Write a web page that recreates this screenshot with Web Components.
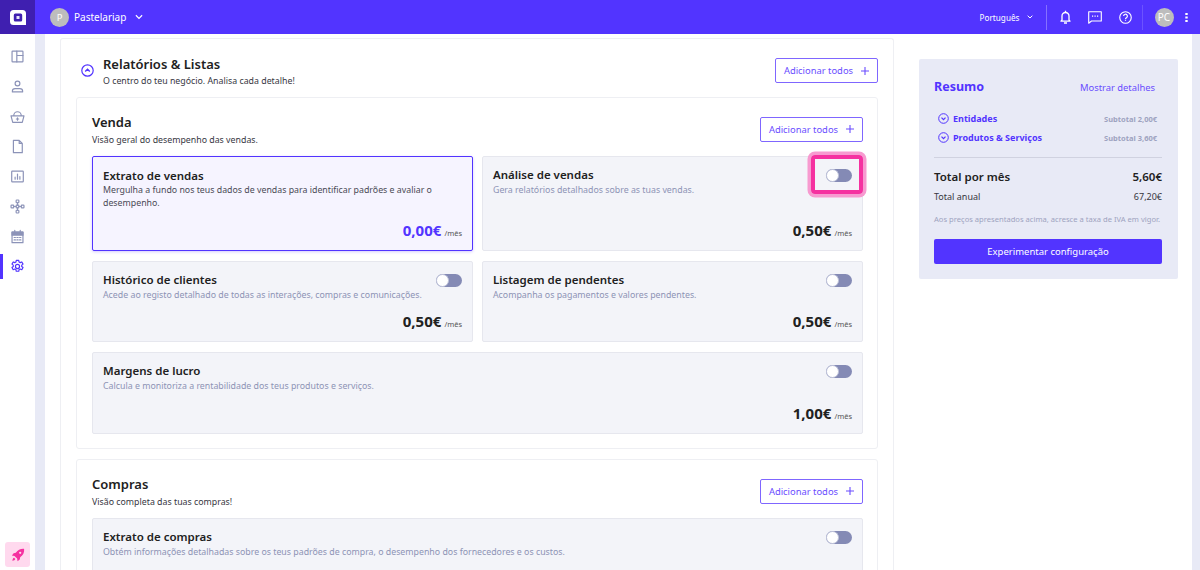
<!DOCTYPE html>
<html lang="pt"><head><meta charset="utf-8">
<style>
html,body{margin:0;padding:0;height:100%;overflow:hidden}
body{font-family:"Noto Sans",sans-serif;color:#212121;background:#e8eaf6}
</style></head>
<body>
<app-shell></app-shell>
<script>
const I={
 layout:'<rect x="3" y="3" width="16" height="16" rx="1"/><path d="M10 3v16M10 9.5h9"/>',
 user:'<circle cx="11" cy="6.5" r="3.5"/><path d="M3.5 19v-1.5c0-2 2-3.5 4-3.5h7c2 0 4 1.5 4 3.5V19z"/>',
 basket:'<path d="M1.5 10h19L18 19.5H4zM5.5 10a5.5 6 0 0 1 11 0M11 13v3.5M9.3 14.7h3.4"/>',
 doc:'<path d="M5 2h8.5L18 6.5V20H5zM13.5 2v4.5H18"/>',
 chart:'<rect x="2.5" y="3" width="17" height="16" rx="1"/><path d="M7.5 15v-3M11 15V7.5M14.5 15v-4"/>',
 nodes:'<rect x="9" y="1.5" width="4" height="4" rx="1"/><rect x="9" y="16.5" width="4" height="4" rx="1"/><rect x="1.5" y="9" width="4" height="4" rx="1"/><rect x="9" y="9" width="4" height="4" rx="1"/><rect x="16.5" y="9" width="4" height="4" rx="1"/><path d="M11 5.5V9M11 13v3.5M5.5 11H9M13 11h3.5"/>',
 cal:'<path d="M3 4.5h16V20H3z"/><path d="M3 4.5h16V9H3z" fill="currentColor"/><path d="M7 2v3M15 2v3"/><path stroke-width="1.6" d="M6 12.5h2M10 12.5h2M14 12.5h2M6 16h2M10 16h2M14 16h2"/>',
 gear:'<circle cx="11" cy="11" r="3"/><path d="M9.2 2h3.6l.5 2.5 1.7.8 2.3-1 1.8 3.2-1.9 1.5v2l1.9 1.5-1.800 3.200-2.300-1-1.700.8-.5 2.500H9.200l-.5-2.500-1.700-.8-2.300 1-1.800-3.200 1.900-1.500v-2L2.900 7.500l1.800-3.200 2.300 1 1.700-.8z"/>'
};
customElements.define('nav-icon',class extends HTMLElement{
 connectedCallback(){
  const a=this.hasAttribute('active');const c=a?'#5234ff':'#8c93b8';
  this.attachShadow({mode:'open'}).innerHTML=`<style>:host{display:flex;height:30px;align-items:center;justify-content:center;position:relative;color:${c}}
  .bar{position:absolute;left:0;top:3px;bottom:2.5px;width:3px;background:#5234ff}</style>
  ${a?'<div class="bar"></div>':''}
  <svg width="15" height="15" viewBox="0 0 22 22" fill="none" stroke="${c}" stroke-width="1.75" stroke-linejoin="round" stroke-linecap="round">${I[this.getAttribute('icon')]}</svg>`;
 }
});
customElements.define('side-bar',class extends HTMLElement{
 constructor(){super();this.attachShadow({mode:'open'}).innerHTML=`<style>
 :host{display:flex;flex-direction:column;width:35px;background:#fff;flex:none;box-sizing:border-box;padding:7px 0 0}
 .sp{flex:1}
 .rocket{width:25px;height:25px;margin:0 0 3px 5px;background:#ffd9ee;border-radius:3px;display:flex;align-items:center;justify-content:center}
 </style>
 <nav-icon icon="layout"></nav-icon><nav-icon icon="user"></nav-icon><nav-icon icon="basket"></nav-icon><nav-icon icon="doc"></nav-icon>
 <nav-icon icon="chart"></nav-icon><nav-icon icon="nodes"></nav-icon><nav-icon icon="cal"></nav-icon><nav-icon icon="gear" active></nav-icon>
 <div class="sp"></div>
 <div class="rocket"><svg width="14" height="14" viewBox="0 0 16 16" fill="#f531a0"><path d="M15 1c-4-.3-7 1-9.500 4.500L3 6 1 8.500l3 .5 3 3 .5 3L10 13l.5-2.500C14 8 15.300 5 15 1z"/><path d="M3.500 11c-1 .3-1.800 1.500-2 3.500 2-.2 3.200-1 3.500-2z"/><circle cx="10.500" cy="5.500" r="1.300" fill="#ffd9ee"/></svg></div>`;}
});
customElements.define('top-bar',class extends HTMLElement{
 constructor(){super();this.attachShadow({mode:'open'}).innerHTML=`<style>
 :host{display:flex;height:34px;background:#5234ff;color:#fff;align-items:center;flex:none}
 .logo{width:35px;height:34px;background:#3f1fb0;display:flex;align-items:center;justify-content:center;flex:none}
 .org{display:flex;align-items:center;margin-left:15px;font-size:10px}
 .av{width:19px;height:19px;border-radius:50%;background:#bdbdbd;display:flex;align-items:center;justify-content:center;font-size:9.5px;margin-right:5px}
 .sp{flex:1}
 .lang{font-size:8.2px;display:flex;align-items:center;margin-right:13px}
 .sep{width:1px;height:25px;background:rgba(255,255,255,.3);flex:none}
 svg{display:block;flex:none}
 .pc{width:19px;height:19px;border-radius:50%;background:#bdbdbd;display:flex;align-items:center;justify-content:center;font-size:10px;margin:0 11.5px 0 11.5px}
 </style>
 <div class="logo"><svg width="16" height="15" viewBox="0 0 16 15"><path d="M3.5 0h9A3.5 3.5 0 0 1 16 3.5V15H3.5A3.5 3.5 0 0 1 0 11.5v-8A3.5 3.5 0 0 1 3.5 0z" fill="#fff"/><rect x="3.8" y="3.5" width="8.4" height="8" rx="1.5" fill="#3f1fb0"/><rect x="6.5" y="6" width="3" height="3" fill="#e9e4fb"/></svg></div>
 <div class="org"><span class="av">P</span>Pastelariap<svg style="margin-left:9px" width="8" height="6" viewBox="0 0 9 6" fill="none" stroke="#fff" stroke-width="1.3"><path d="M1 1l3.5 3.5L8 1"/></svg></div>
 <div class="sp"></div>
 <div class="lang">Português<svg style="margin-left:7.5px" width="6" height="4" viewBox="0 0 9 6" fill="none" stroke="#fff" stroke-width="1.5"><path d="M1 1l3.5 3.5L8 1"/></svg></div>
 <div class="sep"></div>
 <svg style="margin-left:13px" width="11" height="14" viewBox="0 0 11 14" fill="none" stroke="#fff" stroke-width="1.3"><path d="M2 10V6a3.5 3.5 0 0 1 7 0v4l1 1.2H1z" stroke-linejoin="round"/><path d="M4 13h3M5.5 .8v1.7"/></svg>
 <svg style="margin-left:16.5px" width="14" height="13" viewBox="0 0 14 13" fill="none" stroke="#fff" stroke-width="1.1"><path d="M.7.7h12.6V10H3.5L.7 12.2z" stroke-linejoin="round"/><path stroke-width="1.2" d="M4 5.2h1.2M6.500 5.200h1.200M9 5.200h1.200"/></svg>
 <svg style="margin-left:17.5px" width="13" height="13" viewBox="0 0 14 14" fill="none" stroke="#fff" stroke-width="1.2"><circle cx="7" cy="7" r="6.2"/><path d="M5 5.500a2 2 0 1 1 3 1.700c-.7.400-1 .8-1 1.600M7 10v.9" stroke-width="1.3"/></svg>
 <div class="sep" style="margin-left:10px;opacity:.5"></div>
 <div class="pc">PC</div>
 <svg style="margin-right:12px" width="3" height="9" viewBox="0 0 3 9" fill="#fff"><rect x=".3" y="0" width="2.4" height="2"/><rect x=".3" y="3.5" width="2.4" height="2"/><rect x=".3" y="7" width="2.4" height="2"/></svg>`;}
});
customElements.define('add-all',class extends HTMLElement{
 constructor(){super();this.attachShadow({mode:'open'}).innerHTML=`<style>
 :host{display:inline-flex;height:25px;width:103px;box-sizing:border-box;border:1px solid #7f66ff;border-radius:2px;align-items:center;justify-content:center;gap:8px;color:#6a4dff;font-size:9.4px;background:#fff;flex:none}
 </style>Adicionar todos<svg width="8" height="8" viewBox="0 0 8 8" stroke="#6a4dff" stroke-width="1.1"><path d="M4 0v8M0 4h8"/></svg>`;}
});
customElements.define('tog-gle',class extends HTMLElement{
 constructor(){super();this.attachShadow({mode:'open'}).innerHTML=`<style>
 :host{display:block;width:26px;height:13px;border-radius:6.5px;background:#848ab5;position:relative;flex:none}
 i{position:absolute;left:0;top:0;width:13px;height:13px;box-sizing:border-box;border-radius:50%;background:#fff;border:1px solid #bfc3da}
 </style><i></i>`;}
});
customElements.define('mod-card',class extends HTMLElement{
 connectedCallback(){
  const on=this.hasAttribute('selected');const price=this.getAttribute('price');
  this.attachShadow({mode:'open'}).innerHTML=`<style>
 :host{display:flex;flex-direction:column;box-sizing:border-box;height:${this.getAttribute('h')||'81.7'}px;padding:${on?'11px 10px 10px':'10px 10px 10px'};border-radius:2px;
   background:${on?'#f6f4ff':'#f3f4f9'};border:${on?'1.5px solid #5234ff':'1px solid #e6e7ee'};position:relative;${on?'box-shadow:0 1px 3px rgba(82,52,255,.25);':''}}
 .t{display:flex;justify-content:space-between;align-items:flex-start;height:${on?16:17}px}
 h4{margin:0;font-size:11.5px;line-height:15px;font-weight:600;color:#212121}
 p{margin:0;font-size:8.8px;line-height:13px;color:${on?'#4a4a55':'#8d93b5'}}
 .pr{margin-top:auto;display:flex;justify-content:flex-end;align-items:baseline;color:${on?'#5234ff':'#212121'}}
 b{font-size:15px;line-height:20px;font-weight:700}
 small{font-size:7.5px;margin-left:3px;color:#555}
 .hl{position:absolute;top:-2px;right:-1px;width:52px;height:39.5px;box-sizing:border-box;border:4px solid #f531a0;border-radius:4px;box-shadow:0 0 0 3.5px #f79ad0}
 tog-gle{margin-top:2px}
 </style>
 <div class="t"><h4>${this.getAttribute('name')}</h4>${on?'':'<tog-gle></tog-gle>'}</div>
 <p>${this.getAttribute('desc')}</p>
 ${price?`<div class="pr"><b>${price}</b><small>/mês</small></div>`:''}
 ${this.hasAttribute('hl')?'<div class="hl"></div>':''}`;
 }
});
customElements.define('sec-card',class extends HTMLElement{
 connectedCallback(){
  this.attachShadow({mode:'open'}).innerHTML=`<style>
 :host{display:block;background:#fff;border:1px solid #eeeff3;border-radius:3px;padding:15px 14px 14.5px 15px}
 .h{display:flex;justify-content:space-between;align-items:flex-start;margin-bottom:15.5px;height:27px}
 h3{margin:0;font-size:13px;line-height:18px;font-weight:600}
 p{margin:2px 0 0;font-size:8.8px;line-height:14px;color:#37373f}
 add-all{margin-top:3.5px}
 .g{display:grid;grid-template-columns:381px 381px;column-gap:9px;row-gap:10px}
 ::slotted(.wide){grid-column:1/3}
 </style>
 <div class="h"><div><h3>${this.getAttribute('name')}</h3><p>${this.getAttribute('desc')}</p></div><add-all></add-all></div>
 <div class="g"><slot></slot></div>`;
 }
});
customElements.define('sum-panel',class extends HTMLElement{
 constructor(){super();
 const ch='<svg width="11" height="11" viewBox="0 0 11 11" fill="none" stroke="#5234ff" stroke-width="1"><circle cx="5.5" cy="5.5" r="4.8"/><path d="M3.5 4.7l2 2 2-2" stroke-width="1.2"/></svg>';
 this.attachShadow({mode:'open'}).innerHTML=`<style>
 :host{display:block;width:259px;height:220px;box-sizing:border-box;background:#e8eaf6;border-radius:2px;padding:18px 16px 0 15px;flex:none}
 .r{display:flex;justify-content:space-between;align-items:center}
 h3{margin:0;font-size:12.5px;line-height:20px;font-weight:700;color:#5234ff}
 .m{font-size:9.4px;color:#6a4dff;margin-right:7px}
 .e{height:19px;padding:0 5px 0 4px;font-size:9px;font-weight:700;color:#5234ff}
 .e span:first-child{display:flex;align-items:center;gap:4px}
 .e .s{font-size:7.5px;font-weight:700;color:#9ea3c0}
 hr{border:0;border-top:1px solid #d0d2e0;margin:10px 0 8.5px}
 .tot{font-size:11.5px;line-height:20px;font-weight:600;color:#212121}
 .an{font-size:9px;line-height:16px;color:#37373f;margin-top:2.5px}
 .note{font-size:7.6px;line-height:11px;color:#9ea3c0;margin-top:8.5px;white-space:nowrap}
 .b{margin-top:14px;height:25px;background:#5234ff;color:#fff;border-radius:2px;font-size:9.5px;display:flex;align-items:center;justify-content:center}
 </style>
 <div class="r"><h3>Resumo</h3><span class="m">Mostrar detalhes</span></div>
 <div style="height:12px"></div>
 <div class="r e"><span>${ch}Entidades</span><span class="s">Subtotal 2,00€</span></div>
 <div class="r e"><span>${ch}Produtos &amp; Serviços</span><span class="s">Subtotal 3,60€</span></div>
 <hr>
 <div class="r tot"><span>Total por mês</span><span>5,60€</span></div>
 <div class="r an"><span>Total anual</span><span>67,20€</span></div>
 <div class="note">Aos preços apresentados acima, acresce a taxa de IVA em vigor.</div>
 <div class="b">Experimentar configuração</div>`;}
});
customElements.define('rep-panel',class extends HTMLElement{
 constructor(){super();this.attachShadow({mode:'open'}).innerHTML=`<style>
 :host{display:block;width:834px;box-sizing:border-box;border:1px solid #eeeff3;border-bottom:0;border-radius:3px 3px 0 0;padding:0 15px;background:#fff;height:540px;overflow:hidden;flex:none}
 .h{display:flex;align-items:center;height:58px}
 .i{width:13px;margin:4px 9px 0 5px;display:flex}
 h2{margin:0;font-size:13px;line-height:18px;font-weight:600}
 p{margin:1px 0 0;font-size:8.8px;line-height:14px;color:#37373f}
 add-all{margin-left:auto;margin-top:5px}
 .tx{margin-top:6px}
 slot{display:block}
 ::slotted(sec-card){margin-bottom:10px}
 </style>
 <div class="h"><div class="i"><svg width="13" height="13" viewBox="0 0 13 13" fill="none" stroke="#5234ff" stroke-width="1.2"><circle cx="6.5" cy="6.5" r="5.7"/><path d="M4.2 7.5l2.3-2.3 2.3 2.3" stroke-width="1.4"/></svg></div>
 <div class="tx"><h2>Relatórios &amp; Listas</h2><p>O centro do teu negócio. Analisa cada detalhe!</p></div><add-all></add-all></div>
 <slot></slot>`;}
});
customElements.define('app-shell',class extends HTMLElement{
 constructor(){super();this.attachShadow({mode:'open'}).innerHTML=`<style>
 :host{display:flex;flex-direction:column;height:570px;width:1200px;overflow:hidden}
 .b{display:flex;flex:1;min-height:0}
 .gut{width:10px;flex:none}
 .main{display:flex;flex:1;background:#fff;padding:4px 0 0 15px;min-width:0;overflow:hidden}
 .right{width:8px;background:#e8eaf6;flex:none;margin-top:-4px}
 sum-panel{margin:21px 0 0 25px}
 </style>
 <top-bar></top-bar>
 <div class="b"><side-bar></side-bar><div class="gut"></div>
 <div class="main"><rep-panel>
 <sec-card name="Venda" desc="Visão geral do desempenho das vendas.">
  <mod-card h="95" selected name="Extrato de vendas" desc="Mergulha a fundo nos teus dados de vendas para identificar padrões e avaliar o desempenho." price="0,00€"></mod-card>
  <mod-card h="95" hl name="Análise de vendas" desc="Gera relatórios detalhados sobre as tuas vendas." price="0,50€"></mod-card>
  <mod-card name="Histórico de clientes" desc="Acede ao registo detalhado de todas as interações, compras e comunicações." price="0,50€"></mod-card>
  <mod-card name="Listagem de pendentes" desc="Acompanha os pagamentos e valores pendentes." price="0,50€"></mod-card>
  <mod-card class="wide" name="Margens de lucro" desc="Calcula e monitoriza a rentabilidade dos teus produtos e serviços." price="1,00€"></mod-card>
 </sec-card>
 <sec-card name="Compras" desc="Visão completa das tuas compras!">
  <mod-card class="wide" name="Extrato de compras" desc="Obtém informações detalhadas sobre os teus padrões de compra, o desempenho dos fornecedores e os custos."></mod-card>
 </sec-card>
 </rep-panel><sum-panel></sum-panel><div style="flex:1"></div><div class="right"></div></div></div>`;}
});
</script>
</body></html>
